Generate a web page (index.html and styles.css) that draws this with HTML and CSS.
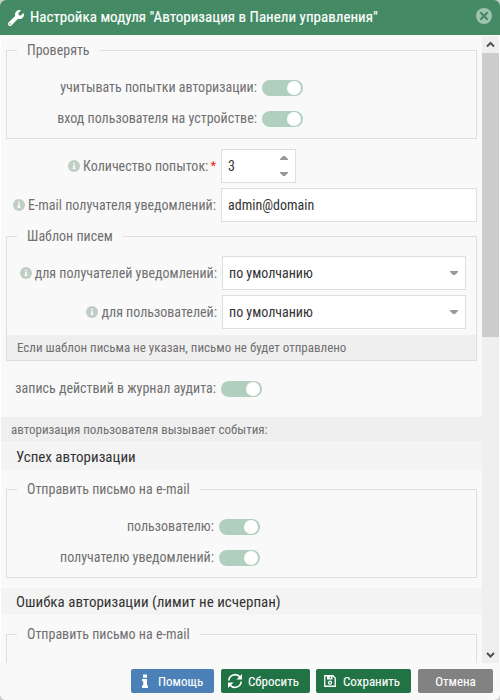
FILE: index.html
```
<!DOCTYPE html>
<html lang="ru">
<head>
<meta charset="utf-8">
<title>Настройка модуля</title>
<link rel="stylesheet" href="styles.css">
</head>
<body>
<svg class="defs" width="0" height="0">
  <symbol id="info" viewBox="0 0 12 12"><circle cx="6" cy="6" r="6" fill="#c0cec6"/><path d="M5.200 2.800h1.600v1.500H5.200zM4.800 5.200h2v2.900h.6v1H4.600v-1h.6V6.200h-.4z" fill="#fff"/></symbol>
</svg>
<div class="window">
  <header class="titlebar">
    <svg class="wrench" viewBox="0 0 512 512"><path fill="#fff" d="M507.7 109.1c-2.200-9-13.500-12.100-20.100-5.500l-74.400 74.400-67.900-11.300-11.300-67.900 74.400-74.400c6.600-6.600 3.400-17.900-5.700-20.200-47.400-11.700-99.600.9-136.600 37.900-39.600 39.600-50.500 97.100-34.100 147.200L18.700 402.800c-25 25-25 65.500 0 90.500s65.500 25 90.500 0l213.200-213.200c50.100 16.700 107.500 5.700 147.400-34.200 37.100-37.100 49.700-89.300 37.900-136.800zM64 472a24 24 0 1 1 0-48 24 24 0 0 1 0 48z"/></svg>
    <h1>Настройка модуля "Авторизация в Панели управления"</h1>
    <svg class="close" viewBox="0 0 16 16"><circle cx="8" cy="8" r="8" fill="#a1c4b1"/><path d="M4.300 4.300l7.400 7.400M11.700 4.300l-7.400 7.400" stroke="#448a64" stroke-width="2.200"/></svg>
  </header>
  <div class="viewport">
    <main class="form">
      <fieldset class="group check">
        <legend>Проверять</legend>
        <div class="row switch"><label>учитывать попытки авторизации:</label><i class="toggle"></i></div>
        <div class="row switch"><label>вход пользователя на устройстве:</label><i class="toggle"></i></div>
      </fieldset>
      <div class="row field">
        <label><svg class="info"><use href="#info"/></svg>Количество попыток:<b>*</b></label>
        <div class="input spin"><span>3</span><div class="arrows"><svg viewBox="0 0 8 4"><path d="M0 4V3l3-3h2l3 3v1z"/></svg><svg viewBox="0 0 8 4"><path d="M0 0v1l3 3h2l3-3V0z"/></svg></div></div>
      </div>
      <div class="row field">
        <label><svg class="info"><use href="#info"/></svg>E-mail получателя уведомлений:</label>
        <div class="input"><span>admin@domain</span></div>
      </div>
      <fieldset class="group template">
        <legend>Шаблон писем</legend>
        <div class="row field">
          <label><svg class="info"><use href="#info"/></svg>для получателей уведомлений:</label>
          <div class="input combo"><span>по умолчанию</span><svg viewBox="0 0 8 4"><path d="M0 0v1l3 3h2l3-3V0z"/></svg></div>
        </div>
        <div class="row field">
          <label><svg class="info"><use href="#info"/></svg>для пользователей:</label>
          <div class="input combo"><span>по умолчанию</span><svg viewBox="0 0 8 4"><path d="M0 0v1l3 3h2l3-3V0z"/></svg></div>
        </div>
        <p class="note">Если шаблон письма не указан, письмо не будет отправлено</p>
      </fieldset>
      <div class="row switch audit"><label>запись действий в журнал аудита:</label><i class="toggle"></i></div>
      <p class="events">авторизация пользователя вызывает события:</p>
      <h2>Успех авторизации</h2>
      <fieldset class="group mail">
        <legend>Отправить письмо на e-mail</legend>
        <div class="row switch"><label>пользователю:</label><i class="toggle"></i></div>
        <div class="row switch"><label>получателю уведомлений:</label><i class="toggle"></i></div>
      </fieldset>
      <h2>Ошибка авторизации (лимит не исчерпан)</h2>
      <fieldset class="group mail">
        <legend>Отправить письмо на e-mail</legend>
      </fieldset>
    </main>
    <div class="scrollbar">
      <svg viewBox="0 0 17 17"><path d="M5 10.500l3.500-3.500 3.500 3.500"/></svg>
      <div class="thumb"></div>
      <svg viewBox="0 0 17 17"><path d="M5 7L8.500 10.500 12 7"/></svg>
    </div>
  </div>
  <footer>
    <button class="help"><svg viewBox="0 0 16 16"><path fill="#fff" d="M6 1.500h4v3.200H6zM5 6h5v6.500h1V15H5v-2.500h1.200V8.300H5z"/></svg><span>Помощь</span></button>
    <button class="reset"><svg viewBox="0 0 16 16"><path d="M1.800 7.500A6.300 6.300 0 0 1 13 4M14.200 8.500A6.300 6.300 0 0 1 3 12" fill="none" stroke="#fff" stroke-width="1.600"/><path d="M15 1v5.500H9.500zM1 15V9.500h5.500z" fill="#fff"/></svg><span>Сбросить</span></button>
    <button class="save"><svg viewBox="0 0 12 12"><path d="M.75.75H9L11.250 3v8.250H.75z" fill="none" stroke="#fff" stroke-width="1.300"/><path d="M3 1h5.500v3.500H3z" fill="#fff"/><path d="M5.800 1.700h1.200v1.600H5.800z" fill="#217346"/><circle cx="6" cy="7.700" r="1.500" fill="none" stroke="#fff" stroke-width="1.300"/></svg><span>Сохранить</span></button>
    <button class="cancel"><span>Отмена</span></button>
  </footer>
</div>
</body>
</html>
```
FILE: styles.css
```
* { box-sizing: border-box; }
body { margin: 0; background: #ccc; font: 14px/20px "Roboto Condensed", Roboto, sans-serif; font-stretch: 75%; color: #707070; }
h1, h2, p, fieldset, legend { margin: 0; padding: 0; font-weight: 400; }
.defs { position: absolute; }
.window { display: flex; flex-direction: column; width: 500px; height: 700px; overflow: hidden; border-radius: 6px; background: #f9f9f9; }
.titlebar { display: flex; align-items: center; height: 35px; padding: 0 8px; background: #448a64; color: #fff; }
.wrench { width: 16px; height: 16px; margin-right: 6px; }
.titlebar h1 { flex: 1; padding-bottom: 2px; font-size: 15px; -webkit-text-stroke: .15px #fff; letter-spacing: .02px; white-space: nowrap; }
.close { width: 16px; height: 16px; margin-top: -3px; }
.viewport { display: flex; height: 628px; padding: 1px 1px 0; background: #fff; overflow: hidden; }
.form { flex: 1; height: 627px; overflow: hidden; background: #f9f9f9; }
.group { position: relative; margin: 0 5px; border: 1px solid #dedede; min-width: 0; }
.group legend { height: 20px; margin-left: 10px; padding: 0 10px; white-space: nowrap; }
.row { display: flex; align-items: center; white-space: nowrap; }
.row label { display: flex; align-items: center; justify-content: flex-end; flex: none; margin-right: 5px; }
.switch label { padding-bottom: 2px; }
.info { width: 12px; height: 12px; margin-right: 3px; }
.row b { color: #e22; font-size: 13px; font-weight: 400; margin-left: 2px; }
.toggle { flex: none; width: 41px; height: 16px; border-radius: 8px; padding: 1px 1px 1px 25px; background: #b1cfbf; }
.toggle::after { content: ""; display: block; width: 14px; height: 14px; border-radius: 7px; background: #fff; }
.check { height: 99px; margin-top: 4px; }
.check .row { height: 31px; }
.check .row:nth-of-type(1) { margin-top: 12px; }
.check label { width: 250px; }
.field { height: 34px; margin: 10px 5px 0 0; }
.field + .field { margin-top: 5px; }
.field label { width: 215px; }
.input { display: flex; align-items: center; justify-content: space-between; flex: 1; height: 34px; padding: 0 6px; border: 1px solid #dedede; background: #fff; color: #333; }
.input svg { width: 8px; height: 4px; fill: #999; }
.combo { padding-right: 7px; }
.spin { flex: none; width: 75px; padding-right: 7px; }
.arrows { display: flex; flex-direction: column; gap: 12px; }
.template { height: 135px; margin-top: 4px; }
.template .field { margin: 10px 10px 5px 0; }
.template .field + .field { margin-top: 0; }
.template .field label { width: 210px; }
.note { height: 25px; margin-top: 6px; padding: 0 10px; background: #efefef; font-size: 13px; line-height: 25px; white-space: nowrap; }
.audit { height: 16px; margin-top: 20px; }
.audit label { width: 215px; }
.events { height: 25px; margin: 20px 0 1px; padding-left: 10px; background: #efefef; font-size: 13px; line-height: 25px; }
h2 { height: 27px; padding-left: 15px; background: #f4f4f4; color: #333; font-size: 15px; line-height: 29px; }
.mail { height: 99px; margin: 9px 5px 10px; }
.mail .row { height: 31px; }
.mail .row:nth-of-type(1) { margin-top: 12px; }
.mail label { width: 207px; }
.scrollbar { display: flex; flex-direction: column; width: 17px; height: 627px; background: #efefef; }
.scrollbar svg { width: 17px; height: 17px; fill: none; stroke: #505050; stroke-width: 2; }
.thumb { height: 284px; margin-bottom: auto; background: #cdcdcd; }
footer { display: flex; justify-content: flex-end; padding: 6px 7px; }
button { display: flex; align-items: center; height: 24px; padding: 0; border: 0; border-radius: 2px; color: #fff; font: 400 13px/24px "Roboto Condensed", Roboto, sans-serif; font-stretch: 75%; -webkit-text-stroke: .1px #fff; white-space: nowrap; }
button span { padding-top: 1px; }
.help { width: 83px; margin-right: 7px; padding-left: 6px; background: #4c81b8; }
.help svg { width: 16px; height: 16px; margin-right: 5px; }
.reset { width: 89px; margin-right: 6px; padding-left: 6px; background: #217346; }
.reset svg { width: 16px; height: 16px; margin-right: 5px; }
.save { width: 95px; margin-right: 7px; padding-left: 8px; background: #217346; }
.save svg { width: 12px; height: 12px; margin-right: 7px; }
.cancel { width: 75px; justify-content: center; background: #828282; }
```
